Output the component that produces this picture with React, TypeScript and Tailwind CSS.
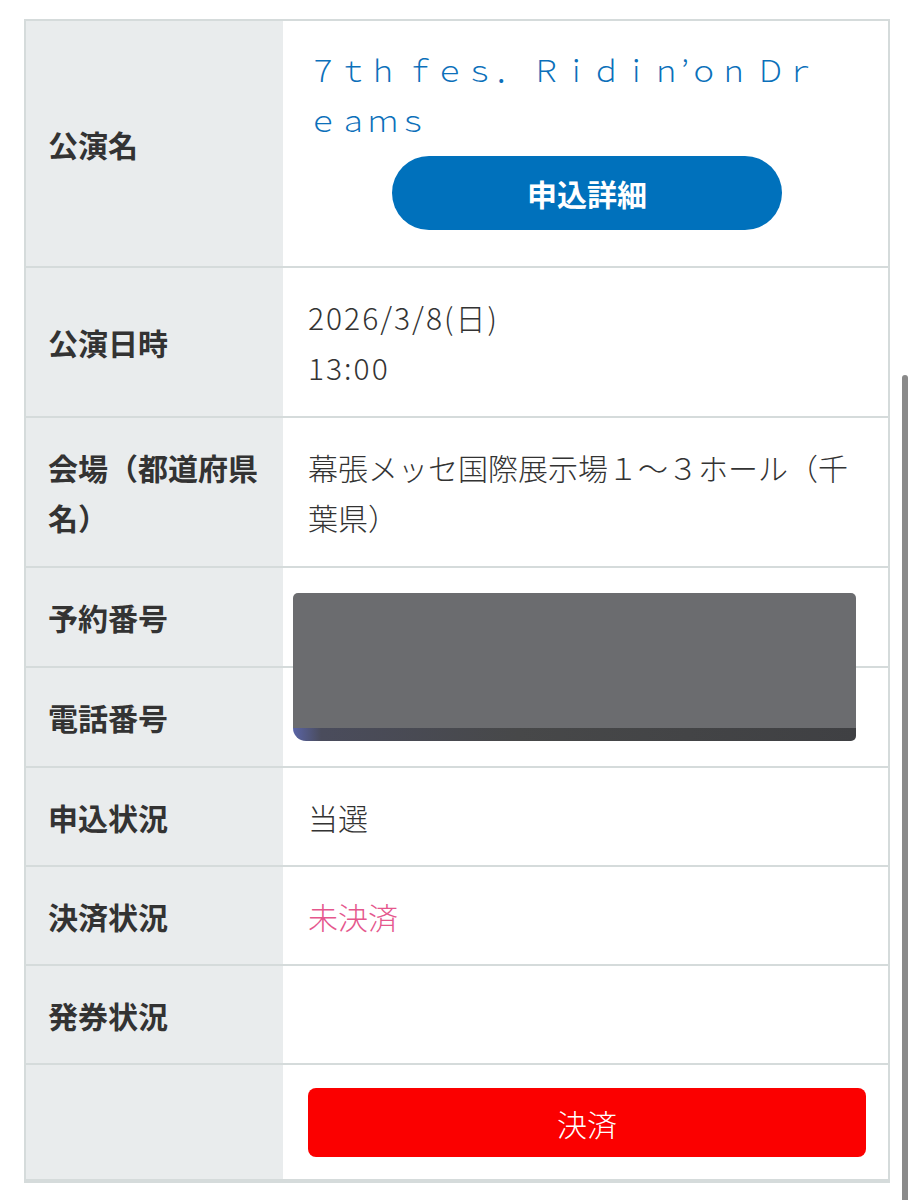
import type { ReactNode } from 'react';

type RowProps = {
  label?: ReactNode;
  children?: ReactNode;
  pad?: string;
};

function Row({ label, children, pad = 'py-[24px]' }: RowProps) {
  return (
    <div className="flex">
      <div className="w-[257px] shrink-0 bg-[#e9eced] flex items-center pl-[22px] pr-[10px] text-[30px] font-bold leading-[50px] text-[#333]">
        <div>{label}</div>
      </div>
      <div className={`flex-1 min-w-0 pl-[25px] pr-[22px] ${pad} text-[30px] font-[300] leading-[50px] text-[#333]`}>
        {children}
        {!children && <div className="h-[50px]" />}
      </div>
    </div>
  );
}

export default function App() {
  return (
    <div className="relative w-[914px] h-[1200px] bg-white overflow-hidden pl-[24px] pt-[19px] font-['Noto_Sans_CJK_JP',sans-serif]">
      <div className="relative w-[866px] border-2 border-[#d5dbdb] divide-y-2 divide-[#d5dbdb]">
        {/* 公演名 */}
        <Row label="公演名" pad="pt-[23px] pb-[24px]">
          <div className="text-[#0b70ba]">
            ７ｔｈ ｆｅｓ． Ｒｉｄｉｎ’ｏｎ Ｄｒ
            <br />
            ｅａｍｓ
          </div>
          <div className="my-[12px] mx-auto w-[390px] h-[74px] rounded-full bg-[#0071bc] flex items-center justify-center text-white font-bold text-[30px]">
            申込詳細
          </div>
        </Row>

        <Row label="公演日時">
          <div className="tracking-[2px]">2026/3/8(日)</div>
          <div className="tracking-[2px]">13:00</div>
        </Row>

        <Row label="会場（都道府県名）">
          幕張メッセ国際展示場１～３ホール（千葉県）
        </Row>

        <Row label="予約番号" />
        <Row label="電話番号" />

        <Row label="申込状況" pad="pt-[24px] pb-[23px]">当選</Row>

        <Row label="決済状況" pad="pt-[24px] pb-[23px]">
          <span className="text-[#e5578d]">未決済</span>
        </Row>

        <Row label="発券状況" pad="pt-[24px] pb-[23px]" />

        <Row pad="pt-[23px] pb-[22px]">
          <div className="w-full h-[69px] rounded-[8px] bg-[#fb0000] flex items-center justify-center text-white text-[30px]">
            決済
          </div>
        </Row>

        {/* 塗りつぶし */}
        <div className="absolute left-[267px] top-[572px] w-[563px] h-[148px] rounded-[5px] overflow-hidden flex flex-col border-0">
          <div className="flex-1 bg-[#6b6c6f]" />
          <div className="h-[13px] rounded-bl-[14px] bg-[linear-gradient(90deg,#5a64a6_0%,#4a4c5c_5%,#474849_40%,#3f4043_100%)]" />
        </div>
      </div>

      {/* スクロールバー */}
      <div className="absolute left-[902px] top-[375px] w-[6px] h-[840px] rounded-full bg-[#8a8a8a]" />
    </div>
  );
}
